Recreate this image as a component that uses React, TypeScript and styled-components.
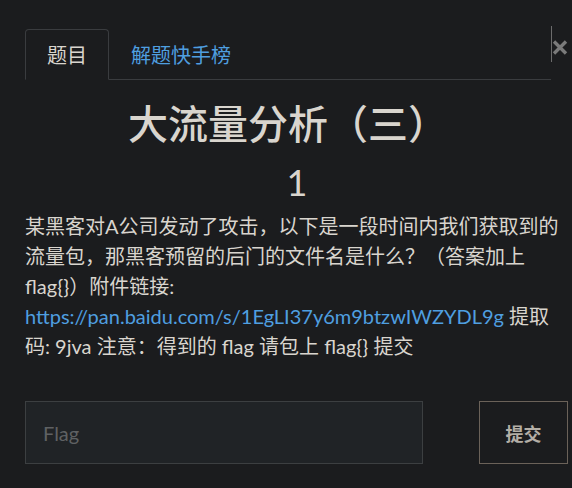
import styled, { createGlobalStyle } from 'styled-components';

const GlobalStyle = createGlobalStyle`
  html, body {
    margin: 0;
    background: #1b1c1e;
  }
  body {
    font-family: Lato, "Noto Sans CJK SC", sans-serif;
    color: #d9d5ce;
  }
`;

// MODAL
const Modal = styled.div`
  width: 572px;
  height: 488px;
  box-sizing: border-box;
  padding-left: 25px;
  overflow: hidden;
`;

// HEADER - tabs + close
const Header = styled.div`
  display: flex;
  align-items: flex-start;
  padding-top: 26px;
`;

const TabList = styled.div`
  display: flex;
  width: 526px;
  margin-top: 3px;
  border-bottom: 1px solid #3a3c3f;
`;

const Tab = styled.div<{ $active?: boolean }>`
  height: 51px;
  box-sizing: border-box;
  padding: 0 21px;
  display: flex;
  align-items: center;
  font-size: 20px;
  margin-bottom: -1px;
  color: ${({ $active }) => ($active ? '#d9d5ce' : '#4f9fe0')};
  border: 1px solid ${({ $active }) => ($active ? '#3a3c3f' : 'transparent')};
  border-bottom-color: ${({ $active }) => ($active ? '#1b1c1e' : 'transparent')};
  border-radius: 4px 4px 0 0;
  background: ${({ $active }) => ($active ? '#1b1c1e' : 'transparent')};
`;

const Close = styled.div`
  height: 36px;
  box-sizing: border-box;
  border-left: 1px solid #6c6c6c;
  padding-top: 13px;
  color: #7a7a7a;
`;

// TITLE
const Title = styled.h1`
  margin: 20px 0 0;
  font-size: 40px;
  font-weight: 500;
  line-height: 48px;
  text-align: center;
  width: 526px;
`;

const Score = styled.div`
  margin-top: 13px;
  padding-left: 9px;
  font-size: 36px;
  line-height: 42px;
  text-align: center;
  width: 526px;
`;

// BODY
const Description = styled.p`
  margin: 8px 0 0;
  width: 540px;
  font-size: 20px;
  line-height: 30px;
`;

const Link = styled.a`
  color: #4f9fe0;
  text-decoration: none;
`;

// FLAG FORM
const Form = styled.div`
  display: flex;
  gap: 56px;
  margin-top: 40px;
`;

const FlagInput = styled.input`
  width: 398px;
  height: 63px;
  box-sizing: border-box;
  padding: 0 17px;
  background: #202326;
  border: 1px solid #3c3f41;
  color: #d9d5ce;
  font-family: Lato, "Noto Sans CJK SC", sans-serif;
  font-size: 20px;
  outline: none;
  &::placeholder {
    color: #5f6163;
  }
`;

const SubmitButton = styled.button`
  width: 89px;
  height: 63px;
  background: transparent;
  border: 1px solid #6b6259;
  color: #b3aea6;
  font-family: Lato, "Noto Sans CJK SC", sans-serif;
  font-size: 18px;
  font-weight: 700;
  padding: 0;
`;

const App = () => (
  <>
    <GlobalStyle />
    <Modal>
      <Header>
        <TabList>
          <Tab $active>题目</Tab>
          <Tab>解题快手榜</Tab>
        </TabList>
        <Close>
          <svg width="16" height="15" viewBox="0 0 16 15">
            <path d="M2 1.5 L14 13.5 M14 1.5 L2 13.5" stroke="currentColor" strokeWidth="3.4" />
          </svg>
        </Close>
      </Header>
      <Title>大流量分析（三）</Title>
      <Score>1</Score>
      <Description>
        {'某黑客对A公司发动了攻击，以下是一段时间内我们获取到的流量包，那黑客预留的后门的文件名是什么？（答案加上flag{}）附件链接: '}
        <Link href="#">https://pan.baidu.com/s/1EgLI37y6m9btzwIWZYDL9g</Link>
        {' 提取码: 9jva 注意：得到的 flag 请包上 flag{} 提交'}
      </Description>
      <Form>
        <FlagInput placeholder="Flag" />
        <SubmitButton>提交</SubmitButton>
      </Form>
    </Modal>
  </>
);

export default App;
